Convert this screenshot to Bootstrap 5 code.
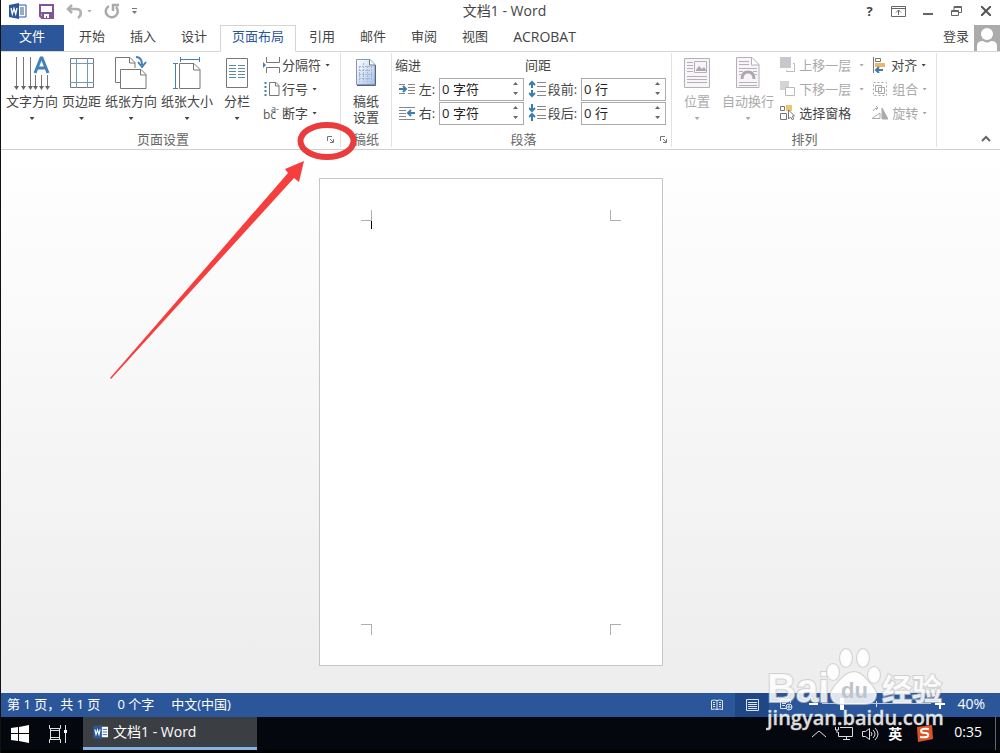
<!DOCTYPE html>
<html lang="zh-CN">
<head>
<meta charset="utf-8">
<meta name="viewport" content="width=device-width, initial-scale=1">
<title>文档1 - Word</title>
<link href="https://cdn.jsdelivr.net/npm/bootstrap@5.3.0/dist/css/bootstrap.min.css" rel="stylesheet">
<style>
body{font-family:"Open Sans","Noto Sans CJK SC",sans-serif;font-size:13px;line-height:18px;color:#444;background:#fff}
button{background:none;border:0;padding:0;color:inherit;font:inherit}
svg{display:block;flex:none}
a{color:inherit;text-decoration:none}
.app{min-height:100vh;border-left:1px solid #111;overflow:hidden}
.latin{font-size:14px}
.titlebar{height:25px;padding-bottom:3px}
.tools-left,.tools-right{flex:1 1 0}
.tools-right button{width:29px;display:grid;place-items:center}
.tabs{height:27px;border-bottom:1px solid #d5d5d5;position:relative;gap:1px}
.tabs .tab{padding:0 12px;height:27px;line-height:23px}
.tabs .file{background:#2b579a;color:#fff;padding:0 18px;width:63px;height:26px;margin-right:2px}
.tabs .current{border:1px solid #d5d5d5;border-bottom-color:#fff;background:#fff;color:#2b579a;padding:0 11px;line-height:21px}
.avatar{height:26px}
.ribbon{height:98px;border-bottom:1px solid #cfcfcf;position:relative;padding:1px 0 2px}
.rgroup{border-right:1px solid #e1e1e1}
.rgroup.first{padding:0 2px 0 3px}
.rgroup.last{padding:0 9px 0 10px}
.rbody{height:77px}
.rname{height:18px;color:#666;text-align:center}
.launcher{width:16px}
.big{display:flex;flex-direction:column;align-items:center;padding:0 2px;line-height:16px}
.big svg.pic{height:36px;margin:2px 0}
.big .caret{margin-top:8px}
.big.cols{padding:0 9px}
.tool{display:flex;align-items:center;height:24px;gap:1px}
.tool .caret{margin-left:3px}
.off{color:#aaa}
.caret{width:5px;height:3px;background:currentColor;clip-path:polygon(0 0,100% 0,50% 100%);flex:none}
.row-h{height:24px}
.indent{width:129px}
.spacing{width:142px;padding-left:1px}
.spacing label{margin:0 4px 0 2px}
.field{width:85px;height:23px;border:1px solid #ababab}
.field input{border:0;outline:0;padding:0 0 0 2px;width:68px;min-width:0;color:#222}
.field div{width:15px}
.field button{height:10px;display:grid;place-items:center;color:#666}
.up{transform:rotate(180deg)}
.workspace{background:linear-gradient(#fff,#eee 95%);padding:28px 20px 20px 0;position:relative}
.sheet{width:344px;aspect-ratio:344/487;background:#fff;border:1px solid #c6c6c6;padding:40px 51px 41px;flex:none}
.sheet-body{position:relative;outline:0}
.crop{position:absolute;width:11px;height:11px;border:0 solid #b0b0b0}
.c1{right:100%;bottom:100%;border-width:0 1px 1px 0;margin:0 -1px -1px 0}
.c2{left:100%;bottom:100%;border-width:0 0 1px 1px;margin:0 0 -1px -1px}
.c3{right:100%;top:100%;border-width:1px 1px 0 0;margin-right:-1px}
.c4{left:100%;top:100%;border-width:1px 0 0 1px;margin-left:-1px}
.cursor{width:1px;height:9px;background:#000;margin-top:1px}
.status{height:24px;background:#2b579a;color:#fff;padding:0 15px 3px 6px}
.status .info{gap:17px}
.view{width:36px;height:24px;display:grid;place-items:center;margin-bottom:-3px}
.view.on{background:#1f4685;width:34px}
.zoomer{appearance:none;width:109px;height:14px;margin:0;background:linear-gradient(#b9c9e2,#b9c9e2) 0 6px/100% 1px no-repeat,linear-gradient(#dde6f3,#dde6f3) 54px 4px/1px 6px no-repeat}
.zoomer::-webkit-slider-thumb{appearance:none;width:4px;height:12px;background:#fff}
.taskbar{height:36px;background:#05070e;border-bottom:3px solid #000;color:#fff;padding-left:10px}
.task{width:174px;height:33px;background:#3b3e43;border-bottom:3px solid #82b4e4;padding:0 10px;gap:4px}
.tray{gap:9px}
.over{position:absolute;pointer-events:none;z-index:5}
.edge{width:1px;height:33px;background:#666;margin:0 4px 0 13px}
</style>
</head>
<body>
<div class="app d-flex flex-column position-relative">
<header>
<div class="titlebar d-flex align-items-center">
  <div class="tools-left d-flex align-items-center ps-2">
    <svg width="18" height="16" viewBox="0 0 18 16"><path d="M10 2h7v12h-7" fill="#fff" stroke="#2b579a"/><path d="M11 5h4M11 7h4M11 9h4M11 11h4" stroke="#2b579a"/><path d="M0 2l10-2v16L0 14z" fill="#2b579a"/><path d="M2 5l1.300 6L5 5.500 6.700 11 8 5" fill="none" stroke="#fff" stroke-width="1.300"/></svg>
    <button class="ms-2 ps-1" aria-label="保存"><svg width="15" height="15" viewBox="0 0 15 15"><path d="M1 1h13v13H3l-2-2z" fill="#fff" stroke="#80539b" stroke-width="2"/><path d="M2 8h11v6H3z" fill="#80539b"/><path d="M5 10h5v4H8v-2H7v2H5z" fill="#fff"/></svg></button>
    <button class="ms-2 ps-1 d-flex align-items-center gap-1 off" aria-label="撤消"><svg width="17" height="15" viewBox="0 0 17 15" fill="none" stroke="#b0b0b0" stroke-width="2.500"><path d="M6 1L2 5l4 4M2 5h8c6 0 6 6 2 9"/></svg><span class="caret"></span></button>
    <button class="ms-2 ps-1" aria-label="重复"><svg width="16" height="16" viewBox="0 0 16 16" fill="none" stroke="#a9a9a9" stroke-width="2.500"><path d="M5 3a6 6 0 1 0 7 1M9 8V2h6"/></svg></button>
    <button class="ms-2 ps-1" aria-label="自定义快速访问工具栏"><svg width="5" height="6"><path d="M0 0h5v1H0zM0 3h5L2.500 6z" fill="#777"/></svg></button>
  </div>
  <div class="latin">文档1 - Word</div>
  <div class="tools-right d-flex justify-content-end align-items-center">
    <button class="fw-bold" aria-label="帮助">?</button>
    <button aria-label="功能区显示选项"><svg width="15" height="11" fill="none" stroke="#666"><path d="M.5.500h14v10H.5zM0 2.500h15M7.500 9V4M5 6.500L7.500 4 10 6.500"/></svg></button>
    <button aria-label="最小化"><svg width="10" height="10"><path d="M0 7h10v2H0z" fill="#666"/></svg></button>
    <button aria-label="还原"><svg width="11" height="10" fill="none" stroke="#666"><path d="M.5 4.500h7v5h-7zM3 4V.5h7.500v6H8M3 1.500h8M0 5.500h8"/></svg></button>
    <button aria-label="关闭"><svg width="10" height="10" stroke="#555" stroke-width="2"><path d="M0 0l10 10M10 0L0 10"/></svg></button>
  </div>
</div>
<nav class="tabs d-flex">
  <a href="#" class="tab file">文件</a><a href="#" class="tab">开始</a><a href="#" class="tab">插入</a><a href="#" class="tab">设计</a><a href="#" class="tab current">页面布局</a><a href="#" class="tab">引用</a><a href="#" class="tab">邮件</a><a href="#" class="tab">审阅</a><a href="#" class="tab">视图</a><a href="#" class="tab latin">ACROBAT</a>
  <a href="#" class="ms-auto d-flex align-items-center avatar gap-1"><span class="pb-1">登录</span><svg width="27" height="26"><path fill="#ababab" d="M1 0h26v26H1z"/><circle cx="14" cy="9" r="6" fill="#fff"/><path d="M4 26v-5q0-5 6-5 4 3 8 0 6 0 6 5v5z" fill="#fff"/></svg></a>
</nav>
<div class="ribbon d-flex">
  <section class="rgroup first">
    <div class="rbody d-flex align-items-start">
      <button class="big"><svg class="pic" width="38" height="36" viewBox="0 0 38 36"><g fill="none" stroke="#777"><path d="M3.500 2v31M10.500 2v31M17.500 2v31M22.500 20v13M28.500 20v13M34.500 20v13"/></g><path d="M1 31h5l-2.500 4zM8 31h5l-2.500 4zM15 31h5l-2.500 4zM20 31h5l-2.500 4zM26 31h5l-2.500 4zM32 31h5l-2.500 4z" fill="#666"/><path d="M22 18L28 3h1l6 15M24 13h9" fill="none" stroke="#4180b9" stroke-width="3"/></svg>文字方向<span class="caret"></span></button>
      <button class="big"><svg class="pic" width="26" height="36" viewBox="0 0 26 36" fill="none"><path d="M1.500 3.500h23v29h-23z" stroke="#777"/><path d="M7.500 3v30M18.500 3v30M1 8.500h24M1 27.500h24" stroke="#6f9bb5"/></svg>页边距<span class="caret"></span></button>
      <button class="big"><svg class="pic" width="32" height="36" viewBox="0 0 32 36" fill="none" stroke="#777"><path d="M5 27.500H.5v-25H15l5 5V13M14.500 3v5H20M5.500 14.500H26l5 5v14H5.500zM25.500 15v5H31"/><path d="M21 2q6 0 6 8M23 7l4 5 4-5" stroke="#4180b9" stroke-width="2"/></svg>纸张方向<span class="caret"></span></button>
      <button class="big"><svg class="pic" width="28" height="36" viewBox="0 0 28 36" fill="none"><path d="M6.500 8.500H21l6 6v19H6.500zM20.500 9v6H27" stroke="#777"/><path d="M7 4.500h20M7.500 2v5M26.500 2v5M2.500 9v24M0 8.500h5M0 33.500h5" stroke="#4180b9"/></svg>纸张大小<span class="caret"></span></button>
      <button class="big cols"><svg class="pic" width="24" height="36" viewBox="0 0 24 36" fill="none"><path d="M1.500 3.500h21v29h-21z" stroke="#777"/><path d="M4 10.500h7M13 10.500h7M4 13.500h7M13 13.500h7M4 16.500h7M13 16.500h7M4 19.500h7M13 19.500h7M4 22.500h7M13 22.500h7" stroke="#5a8bb0"/></svg>分栏<span class="caret"></span></button>
      <div class="pe-2 ps-1">
        <button class="tool"><svg width="18" height="16" fill="none" stroke="#777"><path d="M3.500 0v5.500h13V0M3.500 16v-5.500h13V16"/><path d="M0 5l3 3-3 3z" fill="#4180b9" stroke="none"/></svg>分隔符<span class="caret"></span></button>
        <button class="tool"><svg width="18" height="16" fill="none" stroke="#777"><path d="M6.500 1.500H13l3 3v10H6.500zM12.500 2v3H16"/><path d="M2.500 1v14" stroke="#4180b9" stroke-width="2" stroke-dasharray="2 2"/></svg>行号<span class="caret"></span></button>
        <button class="tool"><svg width="18" height="22" fill="#555" font-size="12"><text x="0" y="17">bc</text><text x="8" y="10" font-size="9">a-</text></svg>断字<span class="caret"></span></button>
      </div>
    </div>
    <div class="d-flex"><div class="rname flex-fill">页面设置</div><button class="launcher" aria-label="页面设置"><svg class="m-auto" width="7" height="7" fill="none" stroke="#777"><path d="M.5 5V.5H5M3 3l3 3M6.500 3v3.500H3"/></svg></button></div>
  </section>
  <section class="rgroup px-2">
    <div class="rbody"><button class="big mx-1" style="width:26px;padding:0"><svg class="pic" width="22" height="36" viewBox="0 0 22 36"><defs><linearGradient id="blue" x2="1" y2="1"><stop stop-color="#fff"/><stop offset="1" stop-color="#a9c0e4"/></linearGradient></defs><path d="M1.500 4.500H15l5 5v20H1.500z" fill="url(#blue)" stroke="#8498bb"/><path d="M20.500 10v20.500H2" fill="none" stroke="#4c6590"/><path d="M14.500 5v5H20" fill="#fff" stroke="#6c7788"/><g fill="none" stroke="#a3b6d6"><path d="M4 11.500h13M4 15.500h13M4 19.500h13M4 23.500h13M4.500 11v16M8.500 8v19M12.500 11v16M16.500 11v16" stroke-dasharray="2 1"/></g></svg>稿纸设置</button></div>
    <div class="rname">稿纸</div>
  </section>
  <section class="rgroup">
    <div class="rbody d-flex" style="padding:0 5px 0 3px">
      <div class="indent">
        <div class="row-h d-flex align-items-center">缩进</div>
        <div class="row-h d-flex align-items-center justify-content-end"><svg width="16" height="14" fill="none" stroke="#888"><path d="M0 2.500h6M9 2.500h7M9 5.500h7M9 8.500h7M0 11.500h6M9 11.500h7"/><path d="M0 7h7M4 4l3 3-3 3" stroke="#3b7dae" stroke-width="2"/></svg><label for="l" class="ms-1 me-1">左:</label><div class="field d-flex"><input id="l" value="0 字符"><div><button aria-label="增加" class="w-100"><span class="caret up"></span></button><button aria-label="减少" class="w-100"><span class="caret"></span></button></div></div></div>
        <div class="row-h d-flex align-items-center justify-content-end"><svg width="16" height="14" fill="none" stroke="#888"><path d="M0 1.500h16M0 4.500h7M0 7.500h7M0 10.500h7M0 13.500h16"/><path d="M9 7h7M12 4L9 7l3 3" stroke="#3b7dae" stroke-width="2"/></svg><label for="r" class="ms-1 me-1">右:</label><div class="field d-flex"><input id="r" value="0 字符"><div><button aria-label="增加" class="w-100"><span class="caret up"></span></button><button aria-label="减少" class="w-100"><span class="caret"></span></button></div></div></div>
      </div>
      <div class="spacing">
        <div class="row-h d-flex align-items-center">间距</div>
        <div class="row-h d-flex align-items-center justify-content-end"><svg width="17" height="18" fill="none" stroke="#888"><path d="M8 2.500h9M8 6.500h9M8 11.500h9M8 15.500h9"/><path d="M3 8V2M0 5l3-3 3 3M3 10v6M0 13l3 3 3-3" stroke="#3b7dae" stroke-width="2"/></svg><label for="b">段前:</label><div class="field d-flex"><input id="b" value="0 行"><div><button aria-label="增加" class="w-100"><span class="caret up"></span></button><button aria-label="减少" class="w-100"><span class="caret"></span></button></div></div></div>
        <div class="row-h d-flex align-items-center justify-content-end"><svg width="17" height="18" fill="none" stroke="#888"><path d="M8 2.500h9M8 5.500h9M8 11.500h9M8 14.500h9"/><path d="M3 0v7M0 4l3 3 3-3M3 17v-6M0 13l3-3 3 3" stroke="#3b7dae" stroke-width="2"/></svg><label for="a">段后:</label><div class="field d-flex"><input id="a" value="0 行"><div><button aria-label="增加" class="w-100"><span class="caret up"></span></button><button aria-label="减少" class="w-100"><span class="caret"></span></button></div></div></div>
      </div>
    </div>
    <div class="d-flex"><div class="rname flex-fill">段落</div><button class="launcher" aria-label="段落设置"><svg class="m-auto" width="7" height="7" fill="none" stroke="#777"><path d="M.5 5V.5H5M3 3l3 3M6.500 3v3.500H3"/></svg></button></div>
  </section>
  <section class="rgroup last">
    <div class="rbody d-flex align-items-start">
      <button class="big off"><svg class="pic" width="26" height="36" viewBox="0 0 26 36" fill="#f8f4fa" stroke="#b5b0b8"><path d="M.5 3.500h25v29H.5z"/><path d="M3 7.500h6M3 10.500h6M3 13.500h6M3 16.500h6M3 21.500h20M3 24.500h20M3 27.500h20M10.500 6.500h12v11h-12z"/><path d="M12 15l3-4 3 3 2-2 2 3v1H12z" fill="#aaa" stroke="none"/></svg>位置<span class="caret"></span></button>
      <button class="big off ms-2"><svg class="pic" width="24" height="36" viewBox="0 0 24 36" fill="#f8f4fa" stroke="#b5b0b8"><path d="M.5 2.500H16l7 7v23H.5zM15.500 3v7H23M3 6.500h10M3 9.500h10M3 13.500h18M3 16.500h4M17 16.500h4M3 19.500h2M19 19.500h2M3 27.500h18M3 30.500h18"/><path d="M6 24q0-7 6-7t6 7" fill="none" stroke="#aaa" stroke-width="3"/></svg>自动换行<span class="caret"></span></button>
      <div class="ms-1">
        <button class="tool off gap-1"><svg width="15" height="16" fill="#cbc6cd"><path d="M0 0h11v11H0z"/><path d="M13 6.500h1.500v8h-8V13" fill="none" stroke="#bbb"/></svg>上移一层<span class="caret ms-1"></span></button>
        <button class="tool off gap-1"><svg width="15" height="16" fill="#d6d2d8"><path d="M0 0h9v9H0z"/><path d="M5.500 6.500h9v8h-9z" fill="#fff" stroke="#bbb"/></svg>下移一层<span class="caret ms-1"></span></button>
        <button class="tool gap-1"><svg width="15" height="16" fill="none" stroke="#777"><path d="M.5 1.500h4v4h-4zM.5 8.500h6v6h-6z"/><path d="M6 0h6v6H6z" fill="#eec36f" stroke="none"/><path d="M8.500 5v9l2-2 2 3 1-1-1-3h2z" fill="#fff"/></svg>选择窗格</button>
      </div>
      <div class="ms-2">
        <button class="tool gap-1"><svg width="15" height="16" fill="none"><path d="M1.500 0v16" stroke="#777"/><path d="M3.500 1.500h5v3h-5z" stroke="#777"/><path d="M3 6h10v4H3z" fill="#edb766"/><path d="M11 13H5M7 10l-3 3 3 3" stroke="#3b7dae" stroke-width="2"/></svg>对齐<span class="caret ms-0"></span></button>
        <button class="tool off gap-1"><svg width="16" height="16" fill="none" stroke="#aaa"><path d="M1.500 1.500h13v13h-13z" stroke-dasharray="2 2"/><path d="M3.500 4.500h6v6h-6zM6.500 6.500h6v6h-6z"/></svg>组合<span class="caret ms-0"></span></button>
        <button class="tool off gap-1"><svg width="16" height="14" fill="none" stroke="#aaa"><path d="M0 12.500h8V7zM1 5q1-3 5-3M4 0l2 2-2 2"/><path d="M10 2v11h6z" fill="#aaa"/></svg>旋转<span class="caret ms-0"></span></button>
      </div>
    </div>
    <div class="rname">排列</div>
  </section>
  <button class="ms-auto align-self-end me-2 pb-1" aria-label="折叠功能区"><svg width="12" height="9" fill="none" stroke="#666" stroke-width="2"><path d="M2 7l4-4 4 4"/></svg></button>
</div>
</header>
<main class="workspace flex-fill d-flex justify-content-center align-items-start">
  <article class="sheet"><div class="sheet-body h-100"><i class="crop c1"></i><i class="crop c2"></i><i class="crop c3"></i><i class="crop c4"></i><div class="cursor"></div></div></article>
</main>
<footer>
<div class="status d-flex align-items-center">
  <div class="info d-flex"><span>第 1 页，共 1 页</span><span>0 个字</span><span>中文(中国)</span></div>
  <button class="view ms-auto" aria-label="阅读视图"><svg width="12" height="12" fill="none" stroke="#dce6f5"><path d="M.5 1.500q3-1 5.500 0 2.500-1 5.500 0v9q-3-1-5.500 0-2.500-1-5.500 0zM6 1v10M2 3.500h2M2 5.500h2M2 7.500h2M8 3.500h2M8 5.500h2M8 7.500h2"/></svg></button>
  <button class="view on" aria-label="页面视图"><svg width="13" height="12" fill="none" stroke="#dce6f5"><path d="M.5.500h12v11H.5zM2 3.500h9M2 5.500h9M2 7.500h9M2 9.500h9"/></svg></button>
  <button class="view" aria-label="Web 版式视图"><svg width="14" height="12" fill="none" stroke="#dce6f5"><path d="M6 9.500H.5v-9h10V4M2 2.500h7M2 4.500h4M2 6.500h3"/><circle cx="9" cy="8" r="3"/><path d="M6 8h6M9 5v6"/></svg></button>
  <button class="ms-1" aria-label="缩小"><svg width="9" height="10"><path d="M0 4h9v2H0z" fill="#fff"/></svg></button>
  <input class="zoomer mx-1" type="range" min="0" max="100" value="17" aria-label="缩放">
  <button aria-label="放大"><svg width="10" height="10"><path d="M0 4h10v2H0zM4 0h2v10H4z" fill="#fff"/></svg></button>
  <span class="latin ps-2 ms-1">40%</span>
</div>
<div class="taskbar d-flex align-items-center">
  <button aria-label="开始"><svg width="18" height="18" fill="#fff"><path d="M0 3l7-1v6H0zM8 2l10-2v8H8zM0 9h7v7l-7-1zM8 9h10v9L8 16z"/></svg></button>
  <button class="ms-3 ps-1" aria-label="任务视图"><svg width="18" height="18" fill="none" stroke="#e0e0e0"><path d="M.5 0v3.500h11V0M.5 18v-3.500h11V18M1.500 4v10M10.500 4v10M1.500 5.500h9M1.500 12.500h9M16.500 0v18"/><path d="M15 5h3v3h-3z" fill="#fff" stroke="none"/></svg></button>
  <button class="task latin ms-3 d-flex align-items-center"><svg width="16" height="14" viewBox="0 0 18 16"><path d="M9 2h8v12H9z" fill="#fff"/><path d="M11 5h5M11 8h5M11 11h5" stroke="#2b579a"/><path d="M0 1l10-1v16L0 15z" fill="#2b579a"/><path d="M2 5l1.300 6L5 5.500 6.700 11 8 5" fill="none" stroke="#fff" stroke-width="1.300"/></svg>文档1 - Word</button>
  <div class="tray ms-auto d-flex align-items-center">
    <button aria-label="显示隐藏的图标"><svg width="14" height="8" fill="none" stroke="#ddd"><path d="M0 7l7-6 7 6"/></svg></button>
    <svg width="18" height="15" fill="none" stroke="#ddd"><path d="M5 1.500h12.500v9h-14V6M8 13.500h7M11.500 11v3M.5 1v3h3V1M2 4v3"/></svg>
    <svg width="17" height="14" fill="none" stroke="#ddd"><path d="M.5 4.500h3l4-3v11l-4-3h-3zM9 5q2 2 0 4M11 3q4 4 0 8M13 1q6 6 0 12"/></svg>
    <b class="latin">英</b>
    <svg class="ms-1" width="19" height="17"><path d="M2 2l15-2 1 14-15 3z" fill="#df5426"/><path d="M14 4q-8-1-8 2 0 2 4 2t3 3q-1 2-8 1" fill="none" stroke="#fff" stroke-width="2"/></svg>
  </div>
  <span class="latin ms-3 ps-1 pb-1">0:35</span><span class="edge"></span>
</div>
</footer>
<svg class="over" style="left:109px;top:120px" width="250" height="262" aria-hidden="true"><ellipse cx="217" cy="21" rx="26.500" ry="16" fill="none" stroke="#ea3b3d" stroke-width="6"/><path d="M194 41L175 49l3 4L0 258l1 1L184 58l5 4z" fill="#f63e3e"/></svg>
<svg class="over" style="right:50px;bottom:20px" width="184" height="90" aria-hidden="true">
  <g fill="#fff" fill-opacity=".85" stroke="#c8c8c8" stroke-opacity=".75" paint-order="stroke" stroke-width="2"><text x="1" y="59" font-family="Liberation Sans" font-weight="700" font-size="40">Bai</text><text x="116" y="57" font-family="Noto Sans CJK SC" font-weight="700" font-size="30">经验</text>
  <ellipse cx="67" cy="29" rx="6" ry="8"/><ellipse cx="80" cy="15" rx="6" ry="9"/><ellipse cx="97" cy="15" rx="6" ry="9"/><ellipse cx="108" cy="32" rx="6" ry="8"/><path d="M88 29q6 0 11 6 8 8 11 14 1 12-12 12H76q-12 0-11-12 3-6 11-14 6-6 12-6z"/></g>
  <text x="75" y="55" font-family="Liberation Sans" font-weight="700" font-size="22" fill="#bfc3ca">du</text>
  <text x="1" y="82" font-family="Open Sans" font-weight="600" font-size="20" fill="#fff" fill-opacity=".85" stroke="#ccc" stroke-opacity=".4" paint-order="stroke">jingyan.baidu.com</text>
</svg>
</div>
<script src="https://cdn.jsdelivr.net/npm/bootstrap@5.3.0/dist/js/bootstrap.bundle.min.js"></script>
</body>
</html>
